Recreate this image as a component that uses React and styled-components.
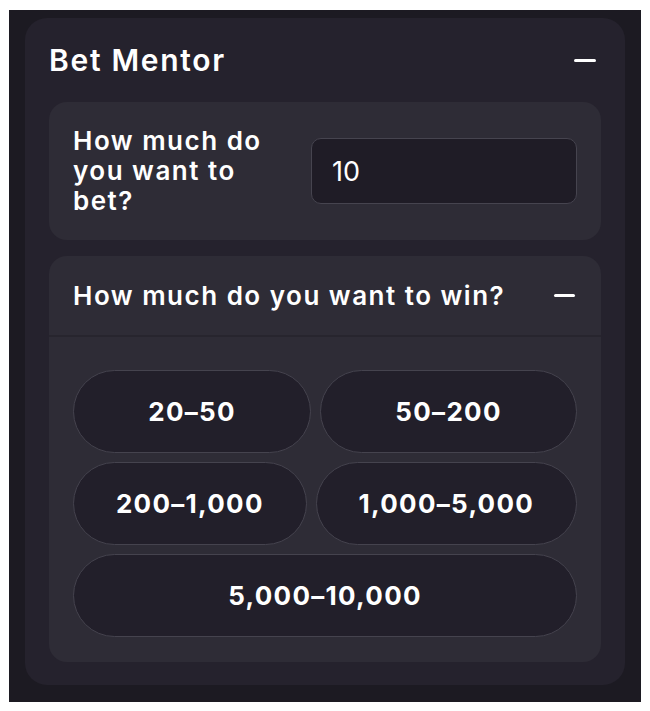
import React, { useState } from 'react'
import styled, { createGlobalStyle } from 'styled-components'

const GlobalStyle = createGlobalStyle`
    html, body {
        margin: 0;
        background: #ffffff;
    }
    body {
        font-family: 'Inter', 'Noto Sans', sans-serif;
        color: #ffffff;
    }
`

const Page = styled.div`
    padding: 10px 9px 9px 9px;
`

const Frame = styled.div`
    background: #1c1a22;
    padding: 8px 16px 17px 16px;
    box-sizing: border-box;
    height: 692px;
`

const Panel = styled.section`
    background: #25222d;
    border-radius: 22px;
    padding: 0 24px 23px;
`

const PanelHeader = styled.header`
    height: 84px;
    display: flex;
    align-items: center;
    justify-content: space-between;
`

const Title = styled.h1`
    margin: 0;
    font-size: 30px;
    font-weight: 600;
    letter-spacing: 1.7px;
`

const Toggle = styled.button`
    width: ${props => props.size || 32}px;
    height: 32px;
    padding: 0;
    border: none;
    background: transparent;
    display: flex;
    align-items: center;
    justify-content: center;
    cursor: pointer;

    &::before {
        content: '';
        display: block;
        width: ${props => props.bar || 22}px;
        height: 3px;
        border-radius: 2px;
        background: #ffffff;
    }
`

const Stack = styled.div`
    display: flex;
    flex-direction: column;
    gap: 16px;
`

const Card = styled.div`
    background: #2e2c36;
    border-radius: 18px;
    overflow: hidden;
`

const BetRow = styled.div`
    display: grid;
    grid-template-columns: 1fr 266px;
    align-items: center;
    gap: 24px;
    padding: 24px;
`

const Label = styled.label`
    font-size: 26px;
    font-weight: 600;
    line-height: 30px;
    letter-spacing: 1.5px;
`

const Amount = styled.input`
    box-sizing: border-box;
    width: 100%;
    height: 66px;
    padding: 0 20px;
    border-radius: 10px;
    border: 1px solid #46444f;
    background: #1f1c26;
    color: #ffffff;
    font-family: inherit;
    font-size: 27px;
    font-weight: 400;
    outline: none;
`

const WinHeader = styled.div`
    height: 81px;
    box-sizing: border-box;
    padding: 0 24px;
    display: flex;
    align-items: center;
    justify-content: space-between;
    border-bottom: 2px solid #27252e;
`

const HeaderText = styled.span`
    font-size: 26px;
    font-weight: 600;
    letter-spacing: 1.5px;
`

const Options = styled.div`
    display: flex;
    flex-wrap: wrap;
    gap: 9px;
    padding: 33px 24px 25px;
`

const Option = styled.button`
    flex: 1 1 auto;
    height: 83px;
    padding: 0 30px;
    border-radius: 42px;
    border: 1px solid #45434e;
    background: ${props => props.active ? '#3a3744' : '#221f2a'};
    color: #ffffff;
    font-family: inherit;
    font-size: 26px;
    font-weight: 700;
    letter-spacing: 1.3px;
    cursor: pointer;
`

const ranges = ['20–50', '50–200', '200–1,000', '1,000–5,000', '5,000–10,000']

const App = () => {
    const [bet, setBet] = useState('10')
    const [picked, setPicked] = useState(null)

    return (
        <Page>
            <GlobalStyle />
            <Frame>
                <Panel>
                    <PanelHeader>
                        <Title>Bet Mentor</Title>
                        <Toggle aria-label="Collapse" />
                    </PanelHeader>
                    <Stack>
                        <Card>
                            <BetRow>
                                <Label htmlFor="bet">How much do you want to bet?</Label>
                                <Amount id="bet" value={bet} onChange={e => setBet(e.target.value)} />
                            </BetRow>
                        </Card>
                        <Card>
                            <WinHeader>
                                <HeaderText>How much do you want to win?</HeaderText>
                                <Toggle size={26} bar={21} aria-label="Collapse" />
                            </WinHeader>
                            <Options>
                                {ranges.map(r => (
                                    <Option key={r} active={picked === r} onClick={() => setPicked(r)}>{r}</Option>
                                ))}
                            </Options>
                        </Card>
                    </Stack>
                </Panel>
            </Frame>
        </Page>
    )
}

export default App
